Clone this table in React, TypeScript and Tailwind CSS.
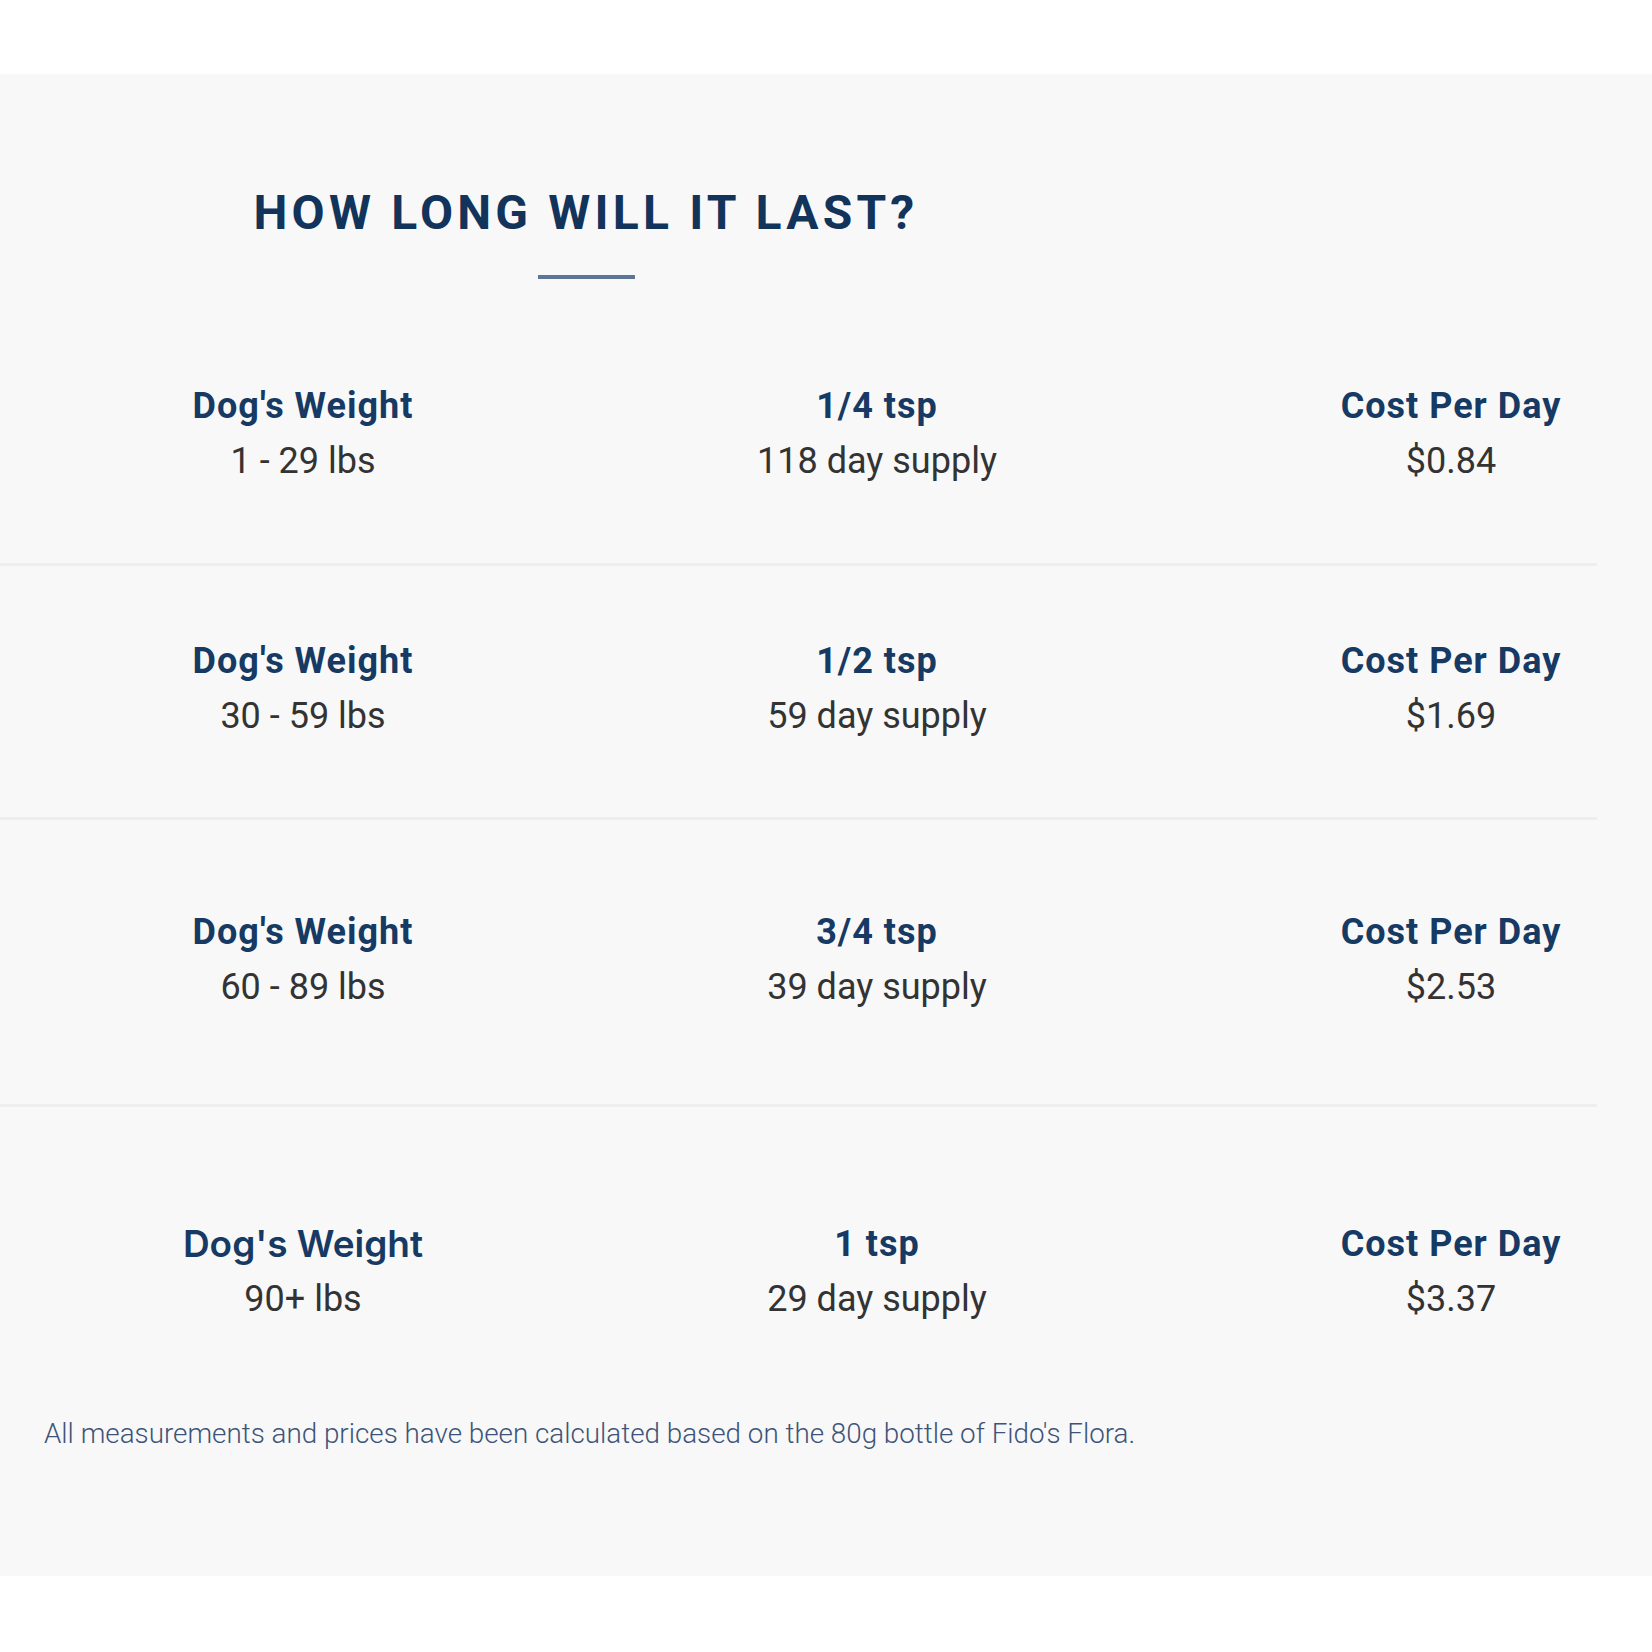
const rows = [
  {
    weight: "1 - 29 lbs",
    dose: "1/4 tsp",
    supply: "118 day supply",
    cost: "$0.84",
    spacing: "pt-[107px] pb-[82px]",
    divider: true,
  },
  {
    weight: "30 - 59 lbs",
    dose: "1/2 tsp",
    supply: "59 day supply",
    cost: "$1.69",
    spacing: "pt-[75px] pb-[81px]",
    divider: true,
  },
  {
    weight: "60 - 89 lbs",
    dose: "3/4 tsp",
    supply: "39 day supply",
    cost: "$2.53",
    spacing: "pt-[92px] pb-[97px]",
    divider: true,
  },
  {
    weight: "90+ lbs",
    dose: "1 tsp",
    supply: "29 day supply",
    cost: "$3.37",
    spacing: "pt-[117px] pb-[100px]",
    divider: false,
    altLabel: true,
  },
]

function Cell({
  label,
  value,
  alt,
}: {
  label: string
  value: string
  alt?: boolean
}) {
  return (
    <div className="flex flex-col items-center text-center">
      <h3
        className={
          alt
            ? "font-['Inter',sans-serif] text-[37px] leading-[40px] font-semibold text-[#163a63]"
            : "text-[36px] leading-[40px] font-bold tracking-[1px] text-[#163a63]"
        }
      >
        {label}
      </h3>
      <p className="mt-[15px] text-[36px] leading-[40px] text-[#333333]">
        {value}
      </p>
    </div>
  )
}

export default function App() {
  return (
    <div className="min-h-[1652px] bg-white font-['Roboto',sans-serif]">
      <div className="h-[74px]" />
      <section className="overflow-hidden bg-[#f8f8f8] pt-[115px] pb-[127px]">
        <div className="flex w-[1172px] flex-col items-center">
          <h2 className="text-[48px] leading-[48px] font-bold tracking-[4.2px] text-[#12335a]">
            HOW LONG WILL IT LAST?
          </h2>
          <span className="mt-[38px] h-[4px] w-[97px] bg-[#5e7696]" />
        </div>

        {rows.map((row) => (
          <div key={row.weight}>
            <div
              className={`ml-[16px] grid w-[1722px] grid-cols-3 ${row.spacing}`}
            >
              <Cell label="Dog's Weight" value={row.weight} alt={row.altLabel} />
              <Cell label={row.dose} value={row.supply} />
              <Cell label="Cost Per Day" value={row.cost} />
            </div>
            {row.divider && <div className="h-[3px] w-[1597px] bg-[#eeeeee]" />}
          </div>
        ))}

        <p className="ml-[44px] text-[27.8px] leading-[30px] font-light text-[#3d5478]">
          All measurements and prices have been calculated based on the 80g
          bottle of Fido's Flora.
        </p>
      </section>
    </div>
  )
}
